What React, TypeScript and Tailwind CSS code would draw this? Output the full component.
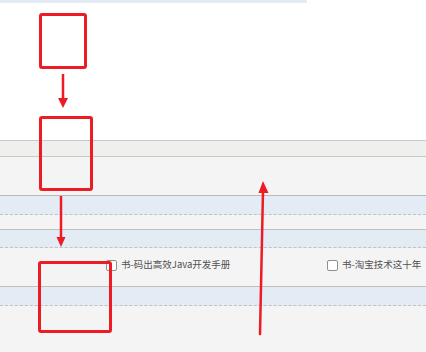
const RED = "#ed1c24";

function Check({ label }: { label: string }) {
  return (
    <label className="flex items-center gap-[4px] text-[9.5px] leading-none text-[#505050]">
      <span className="block h-[11px] w-[11px] rounded-[2px] border border-[#8f8f8f] bg-white" />
      <span>{label}</span>
    </label>
  );
}

function Marks() {
  return (
    <svg
      className="pointer-events-none absolute left-0 top-0"
      width={426}
      height={352}
      viewBox="0 0 426 352"
      fill="none"
    >
      <rect x={40.5} y={14.5} width={45} height={53} rx={1.5} stroke={RED} strokeWidth={3} />
      <rect x={40.5} y={117.5} width={51} height={72} rx={1.5} stroke={RED} strokeWidth={3} />
      <rect x={39.5} y={262.5} width={71} height={69} rx={1.5} stroke={RED} strokeWidth={3} />

      <line x1={63} y1={74} x2={63} y2={100} stroke={RED} strokeWidth={2.5} />
      <polygon points="58,98 68,98 63,108" fill={RED} />

      <line x1={61} y1={196} x2={61} y2={239} stroke={RED} strokeWidth={2.5} />
      <polygon points="56.5,237 65.5,237 61,247" fill={RED} />

      <line x1={260} y1={334} x2={263} y2={191} stroke={RED} strokeWidth={2.5} strokeLinecap="round" />
      <polygon points="263,181 258.5,193 268.5,193" fill={RED} />
    </svg>
  );
}

export default function App() {
  return (
    <div
      className="relative flex h-[352px] w-[426px] flex-col overflow-hidden bg-white"
      style={{ fontFamily: '"Noto Sans CJK SC", "Noto Sans", sans-serif' }}
    >
      <div className="flex h-[3px] shrink-0">
        <div className="w-[306px] bg-[#e3ebf5]" />
        <div className="w-px bg-[#eeeeee]" />
      </div>
      <div className="h-[137px] shrink-0" />

      {/* table */}
      <div className="h-[17px] shrink-0 border-y border-[#c8c8c8] bg-[#efefee]" />
      <div className="h-[39px] shrink-0 border-b border-[#b8b8b8] bg-[#f4f4f4]" />
      <div className="h-[19px] shrink-0 border-b border-dashed border-[#c2c2c2] bg-[#e3ebf5]" />
      <div className="h-[15px] shrink-0 border-b border-[#c0c0c0] bg-[#f4f4f4]" />
      <div className="h-[18px] shrink-0 border-b border-dashed border-[#c2c2c2] bg-[#e3ebf5]" />
      <div className="flex h-[39px] shrink-0 items-center border-b border-[#c0c0c0] bg-[#f4f4f4] pl-[106px] pb-[4px]">
        <div className="w-[221px]">
          <Check label="书-码出高效Java开发手册" />
        </div>
        <Check label="书-淘宝技术这十年" />
      </div>
      <div className="h-[19px] shrink-0 border-b border-dashed border-[#c2c2c2] bg-[#e3ebf5]" />
      <div className="flex-1 bg-[#f4f4f4]" />

      <Marks />
    </div>
  );
}
